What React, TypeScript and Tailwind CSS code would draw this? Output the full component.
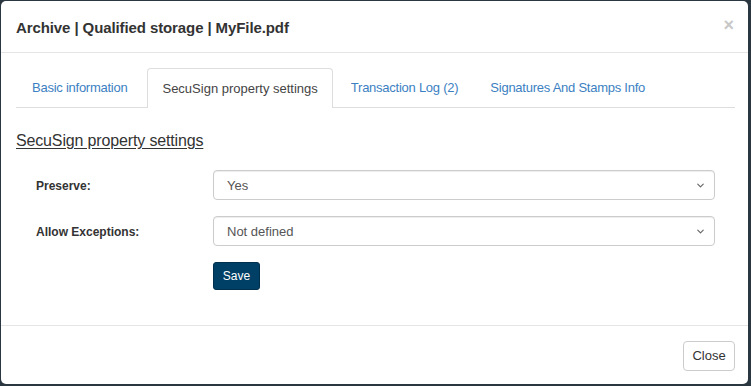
import { ChevronDown } from "lucide-react";

const tabs = [
  { label: "Basic information", active: false, pad: "pl-[16px] pr-[18px]" },
  { label: "SecuSign property settings", active: true, pad: "px-[14px]" },
  { label: "Transaction Log (2)", active: false, pad: "pl-[16px] pr-[14px]" },
  { label: "Signatures And Stamps Info", active: false, pad: "px-[16px]" },
];

function SelectBox({ value }: { value: string }) {
  return (
    <div className="flex h-[30px] w-[502px] items-center justify-between rounded-[4px] border border-[#ccc] bg-white pl-[13px] pr-[8px] text-[13px] text-[#555] shadow-[inset_0_1px_1px_rgba(0,0,0,0.075)]">
      <span className="pt-px">{value}</span>
      <ChevronDown size={11} strokeWidth={2.5} className="text-[#666]" />
    </div>
  );
}

export default function App() {
  return (
    <div className="h-[386px] w-[751px] overflow-hidden bg-[#2a3740] font-['Liberation_Sans',Arial,sans-serif]">
      <div className="ml-px mt-px flex h-[383px] w-[747px] flex-col rounded-[5px] bg-white">
        {/* header */}
        <div className="flex h-[52px] items-center justify-between border-b border-[#e5e5e5] pl-[15px] pr-[14px] pt-[3px]">
          <h4 className="text-[15px] font-bold tracking-[-0.1px] text-[#333]">Archive | Qualified storage | MyFile.pdf</h4>
          <span className="-mt-[7px] text-[18px] font-bold leading-none text-[#c8c8c8]">×</span>
        </div>

        {/* body */}
        <div className="flex-1 pl-[15px] pr-[13px] pt-[15px]">
          <ul className="flex h-[40px] border-b border-[#ddd]">
            {tabs.map((t) => (
              <li key={t.label} className="mr-[2px]">
                <span
                  className={
                    t.active
                      ? `-mb-px flex h-[40px] items-center rounded-t-[4px] border border-b-0 border-[#ddd] bg-white text-[13px] text-[#444] ${t.pad}`
                      : `flex h-[39px] items-center text-[13px] tracking-[-0.25px] text-[#3c7fc2] ${t.pad}`
                  }
                >
                  {t.label}
                </span>
              </li>
            ))}
          </ul>

          <h3 className="mt-[22px] text-[16px] leading-[22px] tracking-[-0.15px] text-[#333] underline underline-offset-2">
            SecuSign property settings
          </h3>

          <div className="mt-[18px] flex flex-col gap-[16px]">
            <div className="flex items-center">
              <label className="w-[197px] pl-[20px] pt-[2px] text-[12px] font-bold text-[#333]">Preserve:</label>
              <SelectBox value="Yes" />
            </div>
            <div className="flex items-center">
              <label className="w-[197px] pl-[20px] pt-[2px] text-[12px] font-bold text-[#333]">Allow Exceptions:</label>
              <SelectBox value="Not defined" />
            </div>
            <div className="flex">
              <div className="w-[197px]" />
              <button className="h-[28px] w-[47px] rounded-[3px] border border-[#00304d] bg-[#003f66] text-[12px] text-white">
                Save
              </button>
            </div>
          </div>
        </div>

        {/* footer */}
        <div className="flex h-[59px] items-start justify-end border-t border-[#e5e5e5] pr-[13px] pt-[15px]">
          <button className="h-[30px] w-[52px] rounded-[4px] border border-[#ccc] bg-white text-[13px] text-[#333]">
            Close
          </button>
        </div>
      </div>
    </div>
  );
}
